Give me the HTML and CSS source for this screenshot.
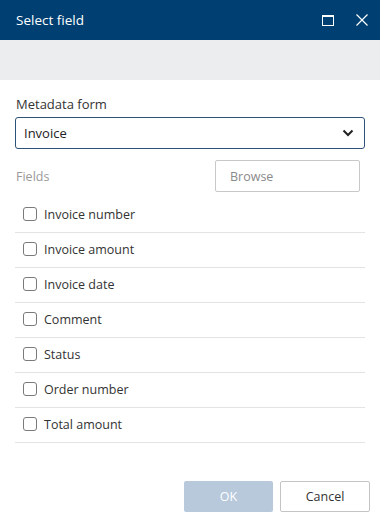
FILE: index.html
```html
<!DOCTYPE html>
<html>
<head>
<meta charset="utf-8">
<link rel="stylesheet" href="styles.css">
</head>
<body>
<div class="dialog">
  <div class="titlebar">
    <span class="title">Select field</span>
    <div class="tools">
      <svg class="ico" width="12" height="11" viewBox="0 0 12 11"><rect x="0.5" y="0.5" width="11" height="10" fill="none" stroke="#fff" stroke-width="1"/><line x1="0" y1="1.5" x2="12" y2="1.5" stroke="#fff" stroke-width="1"/></svg>
      <svg class="ico" width="12" height="12" viewBox="0 0 12 12"><path d="M0.5 0.5L11.5 11.5M11.5 0.5L0.5 11.5" stroke="#fff" stroke-width="1.2" fill="none"/></svg>
    </div>
  </div>
  <div class="band"></div>
  <div class="content">
    <div class="label">Metadata form</div>
    <div class="select">
      <span>Invoice</span>
      <svg width="12" height="8" viewBox="0 0 12 8"><path d="M1.5 1.5L6 6L10.5 1.5" stroke="#222" stroke-width="2" fill="none"/></svg>
    </div>
    <div class="fieldsbar">
      <span class="muted">Fields</span>
      <div class="browse">Browse</div>
    </div>
    <div class="list">
      <div class="row"><span class="cb"></span><span>Invoice number</span></div>
      <div class="row"><span class="cb"></span><span>Invoice amount</span></div>
      <div class="row"><span class="cb"></span><span>Invoice date</span></div>
      <div class="row"><span class="cb"></span><span>Comment</span></div>
      <div class="row"><span class="cb"></span><span>Status</span></div>
      <div class="row"><span class="cb"></span><span>Order number</span></div>
      <div class="row"><span class="cb"></span><span>Total amount</span></div>
    </div>
  </div>
  <div class="footer">
    <div class="btn ok">OK</div>
    <div class="btn cancel">Cancel</div>
  </div>
</div>
</body>
</html>
```
FILE: styles.css
```css
html, body { margin: 0; padding: 0; background: #fff; }
body { font-family: "Open Sans", "Noto Sans", sans-serif; color: #333; font-size: 12.5px; }
.dialog { width: 380px; height: 524px; display: flex; flex-direction: column; }
.titlebar { height: 40px; background: #003f72; display: flex; align-items: center; justify-content: space-between; padding: 0 12px 0 16px; box-sizing: border-box; }
.title { color: #fff; font-size: 13.5px; }
.tools { display: flex; align-items: center; gap: 22px; }
.ico { display: block; }
.band { height: 40px; background: #ecedef; }
.content { padding: 15px 15px 0 15px; flex: 1; }
.label { font-size: 13px; padding-left: 1px; height: 22px; line-height: 18px; }
.select { height: 32px; border: 1px solid #2e5378; border-radius: 3px; box-sizing: border-box; display: flex; align-items: center; justify-content: space-between; padding: 0 10px 0 8px; font-size: 13px; color: #222; }
.fieldsbar { display: flex; justify-content: space-between; align-items: center; margin-top: 11px; padding-left: 1px; padding-right: 5px; }
.muted { color: #9a9a9a; }
.browse { width: 145px; height: 32px; border: 1px solid #c8c8c8; border-radius: 2px; box-sizing: border-box; display: flex; align-items: center; padding-left: 14px; color: #8a8a8a; }
.list { margin-top: 6px; }
.row { height: 35px; border-bottom: 1px solid #e3e3e3; box-sizing: border-box; display: flex; align-items: center; padding-left: 8px; gap: 7px; padding-bottom: 2px; }
.cb { width: 14px; height: 14px; border: 1px solid #7a7a7a; border-radius: 3px; box-sizing: border-box; background: #fff; }
.footer { display: flex; justify-content: flex-end; gap: 7px; padding: 0 10px 12px 0; }
.btn { height: 31px; width: 89px; box-sizing: border-box; display: flex; align-items: center; justify-content: center; border-radius: 2px; font-size: 12.5px; }
.ok { background: #b8c9dc; color: #fff; }
.cancel { width: 90px; border: 1px solid #c4c4c4; color: #333; }
```
